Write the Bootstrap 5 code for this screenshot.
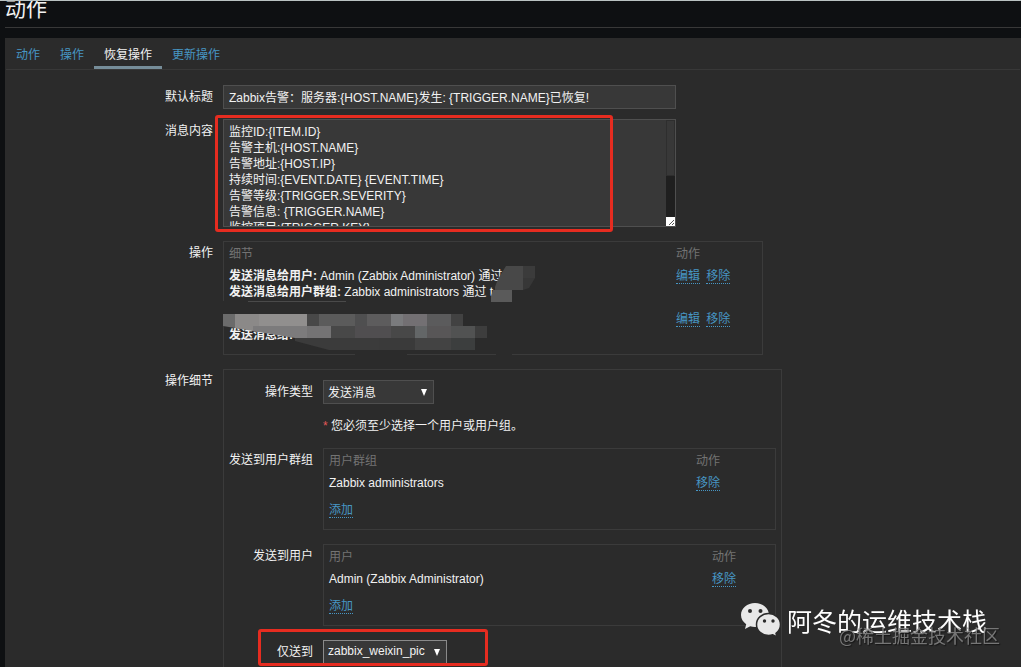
<!DOCTYPE html>
<html lang="zh-CN">
<head>
<meta charset="utf-8">
<meta name="viewport" content="width=device-width, initial-scale=1">
<title>动作</title>
<link href="https://cdn.jsdelivr.net/npm/bootstrap@5.3.0/dist/css/bootstrap.min.css" rel="stylesheet">
<style>
  body { background: #0e1012; color: #f2f2f2; font: 12px/16px "Liberation Sans", "Noto Sans CJK SC", sans-serif; border-top: 1px solid #b9c2c2; }
  .page-head { padding-left: 5px; }
  .page-title { font-size: 21px; font-weight: 400; line-height: 24px; margin-top: -4px; padding-bottom: 6px; border-bottom: 1px solid #383838; }
  .panel { background: #2b2b2b; margin: 10px 0 0 5px; }
  .nav-tabs { border-bottom: 1px solid #383838; margin: 0 1px; --bs-nav-tabs-border-width: 0; }
  .nav-tabs .nav-link { padding: 9px 10px 3px; height: 31px; margin: 0; color: #4796c4; border: 0; border-bottom: 3px solid transparent; border-radius: 0; }
  .nav-tabs .nav-link.active { color: #f2f2f2; background: none; border-bottom-color: #768d99; }
  .form-body { padding-top: 15px; }
  .form-line { display: flex; gap: 10px; }
  .gap-small { margin-bottom: 10px; }
  .gap-below { margin-bottom: 14px; }
  .field-label { width: 208px; padding-top: 4px; text-align: right; flex: none; }
  .field-label.inner { width: 89px; }
  .boxed { border: 1px solid #3b3b3b; }
  .form-control, .form-select { font-size: 12px; line-height: 16px; color: #f2f2f2; background-color: #383838; border: 1px solid #4f4f4f; border-radius: 0; padding: 4px 5px 2px; min-height: 0; }
  .form-control:focus, .form-select:focus { background-color: #383838; color: #f2f2f2; box-shadow: none; border-color: #768d99; }
  .main-field { width: 453px; }
  textarea.form-control { height: 108px; padding-bottom: 0; resize: none; overflow: hidden; }
  .form-select { width: auto; padding: 4px 20px 2px 4px; height: 24px; background-size: 6px 7px; background-position: right 6px center;
    background-image: url("data:image/svg+xml,%3Csvg xmlns='http://www.w3.org/2000/svg' viewBox='0 0 6 7'%3E%3Cpath d='M0 0h6L3 7z' fill='%23fff'/%3E%3C/svg%3E"); }
  .type-select { width: 111px; }
  .media-select { width: 124px; border-color: #8a8a8a; padding-top: 2px; padding-bottom: 4px; }
  .scroll-track { top: 1px; right: 1px; bottom: 1px; width: 9px; background: #1f1f1f; }
  .scroll-thumb { height: 56px; background: #383838; border: 1px solid #2e2e2e; }
  .marker { border: 3px solid #e62c20; border-radius: 3px; pointer-events: none; z-index: 2; }
  .marker-message { left: -8px; top: -4px; width: 398px; height: 117px; }
  .marker-media { left: -65px; top: -11px; width: 230px; height: 37px; }
  .list-box { padding-bottom: 6px; }
  .list-box table { table-layout: fixed; width: 100%; }
  .list-box th { font-weight: 400; color: #737373; padding: 4px 0 0 5px; }
  .list-box td { padding: 6px 0 5px 5px; vertical-align: top; }
  .act { display: inline-block; height: 16px; color: #4796c4; text-decoration: none; border-bottom: 1px dotted #4796c4; }
  .act + .act { margin-left: 3px; }
  .w-ops { width: 540px; }
  .w-details { width: 559px; padding: 10px 0 0; }
  .w-list { width: 453px; }
  .col-ops { width: 447px; }
  .col-group { width: 367px; }
  .col-user { width: 383px; }
  .hint { padding: 14px 0; }
  .star { color: #e45959; }
  .mosaic { left: -1px; top: -1px; pointer-events: none; }
  .brand { right: 34px; bottom: 29px; font: 25px/36px "Noto Sans CJK SC", sans-serif; color: #fff; gap: 6px; z-index: 3; }
  .site { right: 21px; bottom: 19px; font: 18px/26px "Noto Sans CJK SC", sans-serif; color: #8a8a8a; opacity: .8; text-shadow: 1px 1px 1px #111; z-index: 3; }
</style>
</head>
<body class="vh-100 overflow-hidden d-flex flex-column">
<header class="page-head"><h1 class="page-title mb-0">动作</h1></header>
<main class="panel flex-grow-1 d-flex flex-column overflow-hidden">
  <ul class="nav nav-tabs flex-shrink-0">
    <li class="nav-item"><a class="nav-link" href="#action">动作</a></li>
    <li class="nav-item"><a class="nav-link" href="#operations">操作</a></li>
    <li class="nav-item"><a class="nav-link active" aria-current="page" href="#recovery">恢复操作</a></li>
    <li class="nav-item"><a class="nav-link" href="#update">更新操作</a></li>
  </ul>
  <form class="form-body flex-grow-1 d-flex flex-column">
    <div class="form-line gap-small">
      <label class="field-label" for="subject">默认标题</label>
      <input class="form-control main-field" id="subject" type="text" value="Zabbix告警：服务器:{HOST.NAME}发生: {TRIGGER.NAME}已恢复!">
    </div>
    <div class="form-line gap-below">
      <label class="field-label" for="message">消息内容</label>
      <div class="position-relative">
        <textarea class="form-control main-field" id="message">监控ID:{ITEM.ID}
告警主机:{HOST.NAME}
告警地址:{HOST.IP}
持续时间:{EVENT.DATE} {EVENT.TIME}
告警等级:{TRIGGER.SEVERITY}
告警信息: {TRIGGER.NAME}
监控项目:{TRIGGER.KEY}</textarea>
        <div class="scroll-track position-absolute d-flex flex-column justify-content-between">
          <div class="scroll-thumb"></div>
          <svg width="9" height="9"><path d="M0 0h9v9H0z" fill="#fff"/><path d="M3 8l5-5M6 8l2-2" stroke="#555"/></svg>
        </div>
        <div class="marker marker-message position-absolute"></div>
      </div>
    </div>
    <div class="form-line gap-below">
      <div class="field-label">操作</div>
      <div class="boxed list-box w-ops position-relative">
        <table>
          <colgroup><col class="col-ops"><col></colgroup>
          <thead><tr><th>细节</th><th>动作</th></tr></thead>
          <tbody>
            <tr>
              <td><b>发送消息给用户:</b> Admin (Zabbix Administrator) 通过<br><b>发送消息给用户群组:</b> Zabbix administrators 通过 t</td>
              <td><a class="act" href="#edit1">编辑</a> <a class="act" href="#remove1">移除</a></td>
            </tr>
            <tr>
              <td><br><b>发送消息给:</b></td>
              <td><a class="act" href="#edit2">编辑</a> <a class="act" href="#remove2">移除</a></td>
            </tr>
          </tbody>
        </table>
        <svg class="mosaic position-absolute" width="320" height="114">
          <path d="M0 60h1v13H0zM273 113h16v1h-16zM132 113h52v1h-52z" fill="#2b2b2b"/>
          <path d="M25 60.500h98" stroke="#4a4a4a"/>
          <path d="M0 73h12v14L0 85z" fill="#6b6b6b"/>
          <path d="M12 73h24v18L12 87z" fill="#8b8988"/>
          <path d="M36 73h48v12H36z" fill="#918f8e"/>
          <path d="M30 85h54v12H72L30 90z" fill="#7c7b7c"/>
          <path d="M84 73h12v12H84z" fill="#484848"/>
          <path d="M96 73h36v12H96z" fill="#5b5b5b"/>
          <path d="M132 73h12v12h-12z" fill="#4f4f50"/>
          <path d="M144 73h24v12h-24z" fill="#5d5c5d"/>
          <path d="M168 73h12v12h-12z" fill="#7a7b7d"/>
          <path d="M180 73h24v12h-24z" fill="#737073"/>
          <path d="M204 73h24v12h-24z" fill="#5b5b5c"/>
          <path d="M228 73h12v12h-12z" fill="#424242"/>
          <path d="M84 85h24v12H84z" fill="#747374"/>
          <path d="M108 85h24v12h-24z" fill="#484848"/>
          <path d="M132 85h36v12h-36z" fill="#504e50"/>
          <path d="M168 85h24v12h-24z" fill="#484848"/>
          <path d="M192 85h12v12h-12z" fill="#636667"/>
          <path d="M204 85h24v12h-24z" fill="#585657"/>
          <path d="M228 85h24v12h-24z" fill="#515252"/>
          <path d="M252 85h12v12h-12z" fill="#3d3d3d"/>
          <path d="M72 97h84v12h-50L72 100z" fill="#3b3b3b"/>
          <path d="M156 97h36v12h-36z" fill="#3a3a3a"/>
          <path d="M192 97h36v12h-36z" fill="#434343"/>
          <path d="M228 97h24v12h-24z" fill="#3c3e3e"/>
          <path d="M289 25h11v24h-28v-3l3-8 8-13z" fill="#484848"/>
          <path d="M300 25h12v12h-12z" fill="#3b3b3b"/>
          <path d="M300 37h12l-6 10-6 2z" fill="#373737"/>
          <path d="M270 49h19v12h-21v-6z" fill="#5a5a5a"/>
        </svg>
      </div>
    </div>
    <div class="form-line flex-grow-1">
      <div class="field-label">操作细节</div>
      <div class="boxed w-details border-bottom-0">
        <div class="form-line">
          <label class="field-label inner" for="optype">操作类型</label>
          <select class="form-select type-select" id="optype"><option>发送消息</option></select>
        </div>
        <div class="form-line">
          <div class="field-label inner"></div>
          <div class="hint"><span class="star">*</span> 您必须至少选择一个用户或用户组。</div>
        </div>
        <div class="form-line gap-below">
          <div class="field-label inner">发送到用户群组</div>
          <div class="boxed list-box w-list">
            <table>
              <colgroup><col class="col-group"><col></colgroup>
              <thead><tr><th>用户群组</th><th>动作</th></tr></thead>
              <tbody>
                <tr><td>Zabbix administrators</td><td><a class="act" href="#rg">移除</a></td></tr>
                <tr><td colspan="2"><a class="act" href="#ag">添加</a></td></tr>
              </tbody>
            </table>
          </div>
        </div>
        <div class="form-line gap-below">
          <div class="field-label inner">发送到用户</div>
          <div class="boxed list-box w-list">
            <table>
              <colgroup><col class="col-user"><col></colgroup>
              <thead><tr><th>用户</th><th>动作</th></tr></thead>
              <tbody>
                <tr><td>Admin (Zabbix Administrator)</td><td><a class="act" href="#ru">移除</a></td></tr>
                <tr><td colspan="2"><a class="act" href="#au">添加</a></td></tr>
              </tbody>
            </table>
          </div>
        </div>
        <div class="form-line">
          <label class="field-label inner" for="media">仅送到</label>
          <div class="position-relative">
            <select class="form-select media-select" id="media"><option>zabbix_weixin_pic</option></select>
            <div class="marker marker-media position-absolute"></div>
          </div>
        </div>
      </div>
    </div>
  </form>
</main>
<div class="brand position-fixed d-flex align-items-center">
  <svg width="40" height="36" viewBox="0 0 40 36">
    <path d="M14 1C6.300 1 0 6.200 0 13c0 3.800 2 7 5.200 9.200L4 27l5.200-2.700c1.600.4 3.200.7 4.800.7 7.700 0 14-5.200 14-12S21.700 1 14 1z" fill="#e8e8e8"/>
    <circle cx="9" cy="9" r="2" fill="#2b2b2b"/><circle cx="19.500" cy="9" r="2" fill="#2b2b2b"/>
    <path d="M27.500 11.500C21 11.500 15.500 16.300 15.500 22.500S21 33.500 27.500 33.500c1.500 0 3-.3 4.300-.7L36 35l-1-3.700c2.700-2 4.500-5.200 4.500-8.800 0-6.200-5.500-11-12-11z" fill="#e8e8e8" stroke="#2b2b2b" stroke-width="1.500"/>
    <circle cx="23.500" cy="19" r="1.700" fill="#2b2b2b"/><circle cx="32" cy="19" r="1.700" fill="#2b2b2b"/>
  </svg>
  <span>阿冬的运维技术栈</span>
</div>
<div class="site position-fixed">@稀土掘金技术社区</div>
<script src="https://cdn.jsdelivr.net/npm/bootstrap@5.3.0/dist/js/bootstrap.bundle.min.js"></script>
</body>
</html>
